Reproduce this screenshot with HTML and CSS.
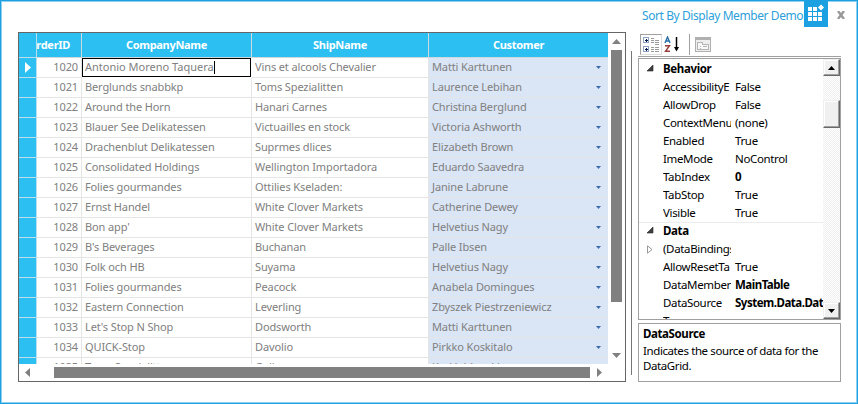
FILE: index.html
```html
<!DOCTYPE html>
<html lang="en">
<head>
<meta charset="utf-8">
<title>Sort By Display Member Demo</title>
<link rel="stylesheet" href="styles.css">
</head>
<body>
<div class="window">
  <header class="titlebar">
    <span class="title">Sort By Display Member Demo</span>
    <svg class="logo" width="24" height="26" shape-rendering="crispEdges"><rect width="24" height="26" fill="#1ba1e2"/><path fill="#fff" d="M4 6h4v4H4zM9 6h4v4H9zM4 11h4v4H4zM9 11h4v4H9zM14 11h4v4h-4zM4 16h4v4H4zM9 16h4v4H9zM14 16h4v4h-4z"/><path shape-rendering="auto" fill="#fff" d="M17 3.500l3 3-3 3-3-3z"/></svg>
    <svg class="close" width="8" height="8"><path d="M1 0l6 8M7 0L1 8" stroke="#999" stroke-width="2.400"/></svg>
  </header>
  <main class="content">
    <section class="grid-box">
      <div class="viewport">
        <div class="row head"><div class="mark"></div><div class="id"><span>OrderID</span></div><div class="company">CompanyName</div><div class="ship">ShipName</div><div class="customer">Customer</div></div>
        <div id="rows"></div>
      </div>
      <div class="vscroll">
        <svg width="9" height="5"><path d="M4.5 0L9 5H0z" fill="#808080"/></svg>
        <div class="vthumb"></div>
        <svg width="9" height="5"><path d="M0 0h9L4.500 5z" fill="#808080"/></svg>
      </div>
      <div class="hscroll">
        <svg width="5" height="9"><path d="M5 0v9L0 4.500z" fill="#808080"/></svg>
        <div class="hthumb"></div>
        <svg width="5" height="9"><path d="M0 0v9l5-4.500z" fill="#808080"/></svg>
      </div>
    </section>
    <div class="splitter"></div>
    <aside class="props">
      <div class="toolbar">
        <div class="tool active"><svg width="18" height="17" shape-rendering="crispEdges"><path fill="#fff" stroke="#8ea3c4" d="M1.500 1.500h5v5h-5zM1.500 10.500h5v5h-5z"/><path stroke="#00194c" d="M3 4h3M4 3v3M3 13h3M4 12v3"/><path stroke="#9a9a9a" d="M9 2.500h3M9 4.500h3M13 4.500h4M9 6.500h3M13 6.500h4M13 8.500h4M9 11.500h3M13 11.500h4M9 13.500h3M13 13.500h4M9 15.500h3M13 15.500h4"/></svg></div>
        <div class="tool"><svg width="16" height="17"><path d="M1 7l2.500-6L6 7M1.800 5h3.500" fill="none" stroke="#286fa8" stroke-width="1.400"/><path d="M1 9.700h4.500L1.500 15.300H6" fill="none" stroke="#983b3b" stroke-width="1.400"/><path d="M12.500 1v13" stroke="#000" stroke-width="1.500"/><path d="M10 11h5l-2.500 4.500z"/></svg></div>
        <div class="sep"></div>
        <svg class="pages" width="16" height="15" shape-rendering="crispEdges"><path fill="#eee" stroke="#b0b0b0" d="M.5.5h15v14H.5z"/><path fill="#b0b0b0" d="M0 0h16v3H0z"/><path fill="#f8f8f8" stroke="#b4b4b4" d="M2.500 5.500h5v2h6v5h-11z"/><path stroke="#b4b4b4" d="M5 9.500h1M8 9.500h4M5 11.500h1"/></svg>
      </div>
      <div class="list">
        <div class="items" id="items"></div>
        <div class="classic">
          <div class="btn"><svg width="7" height="4"><path d="M3.500 0L7 4H0z"/></svg></div>
          <div class="btn thumb"></div>
          <div class="btn last"><svg width="7" height="4"><path d="M0 0h7L3.500 4z"/></svg></div>
        </div>
      </div>
      <div class="help"><b>DataSource</b><p>Indicates the source of data for the<br>DataGrid.</p></div>
    </aside>
  </main>
</div>
<script src="script.js"></script>
</body>
</html>
```
FILE: styles.css
```css
* { box-sizing: border-box; }
body { margin: 0; font: 12px "Noto Sans", "Open Sans", sans-serif; }
svg { display: block; flex: none; }
.window { width: 858px; height: 404px; border: 1px solid #1ba1e2; box-shadow: inset 0 0 0 1px #8fd0f0; background: #fff; overflow: hidden; }
.titlebar { height: 31px; display: flex; justify-content: flex-end; padding-right: 12px; color: #2d9fd9; }
.title { width: 163px; font-size: 12px; line-height: 18px; padding-top: 6px; white-space: nowrap; letter-spacing: -.42px; }
.close { margin: 10px 0 0 9px; }
.logo { margin-left: -1px; }
.content { display: flex; padding-left: 17px; }
.grid-box { width: 608px; height: 350px; border: 1px solid #666; display: grid; grid-template: 331px 17px / 589px 17px; }
.viewport { overflow: hidden; color: #808080; font-size: 11px; letter-spacing: -.12px; white-space: nowrap; }
.row { display: grid; grid-template-columns: 18px 45px 170px 177px 179px; height: 20px; line-height: 18px; }
.row > div { border-right: 1px solid #e5e5e5; border-bottom: 1px solid #e5e5e5; padding-left: 3px; overflow: hidden; }
.row > .mark { background: #2bbff2; border-color: #b9dfee; padding: 4px 0 0 6px; }
.row > .id { text-align: right; padding-right: 3px; }
.row > .customer { background: #dae5f5; border-right: 0; display: flex; justify-content: space-between; padding-right: 7px; }
.customer svg { margin-top: 8px; }
.head { height: 25px; line-height: 24px; color: #fff; font-weight: bold; letter-spacing: -.3px; }
.head > div, .row.head > .customer { background: #2bbff2; border-color: #cfd8dc; text-align: center; justify-content: center; padding: 0; }
.head > .id { display: flex; justify-content: flex-end; }
.row.head > .id { padding-right: 11px; }
.row > .editing { border: 1px solid #000; margin: 0 1px 0 0; padding-left: 2px; line-height: 15px; height: 19px; letter-spacing: 0; }
.caret { display: inline-block; width: 1px; height: 13px; background: #000; vertical-align: -3px; }
.vscroll { display: flex; flex-direction: column; align-items: center; justify-content: space-between; padding: 6px 0; }
.vthumb { width: 11px; height: 252px; background: #808080; margin-bottom: 46px; }
.hscroll { grid-column: 1; display: flex; align-items: center; justify-content: space-between; padding: 0 6px; }
.hthumb { width: 536px; height: 11px; background: #808080; margin-left: 17px; }
.splitter { width: 1px; height: 324px; background: #777; margin: 19px 6px 0 5px; }
.props { width: 203px; }
.toolbar { height: 25px; border-bottom: 1px solid #a0a0a0; display: flex; padding: 2px 0 1px 2px; margin-bottom: 1px; }
.tool { width: 22px; height: 21px; padding: 2px; }
.active { border: 1px solid #a0a0a0; border-right-color: #ddd; border-bottom-color: #ddd; padding: 1px; }
.sep { width: 1px; height: 21px; background: #a0a0a0; margin-left: 5px; }
.pages { margin: 3px 0 0 5px; }
.list { height: 262px; border: 1px solid #a0a0a0; display: flex; overflow: hidden; }
.items { width: 184px; padding-top: 1px; overflow: hidden; font-size: 11.5px; letter-spacing: -.35px; }
.item { display: grid; grid-template-columns: 24px 68px 92px; height: 18px; line-height: 18px; white-space: nowrap; }
.item > * { overflow: hidden; }
.item .val { padding-left: 4px; line-height: 17px; }
.item .bold, .cat b { font-weight: bold; }
.item .bold { letter-spacing: -.5px; }
.item svg { margin: 5px 0 0 8px; }
.rule { box-shadow: inset 0 1px #ececec; }
.classic { width: 17px; display: flex; flex-direction: column; background: repeating-conic-gradient(#f0f0f0 0 25%, #fff 0 50%) 0 0 / 2px 2px; }
.btn { width: 17px; height: 17px; display: grid; place-items: center; background: #f0f0f0; border: 1px solid; border-color: #f0f0f0 #696969 #696969 #f0f0f0; box-shadow: inset -1px -1px #a0a0a0, inset 1px 1px #fff; }
.thumb { height: 28px; margin-top: 24px; }
.last { margin-top: auto; }
.help { height: 59px; border: 1px solid #a0a0a0; margin-top: 3px; padding: 1px 4px; font-size: 11.5px; letter-spacing: -.4px; line-height: 17px; white-space: nowrap; }
.help b { display: block; }
.help p { margin: 1px 0 0; line-height: 15px; }
```
FILE: script.js
```js
const data = [
  ["Antonio Moreno Taquera", "Vins et alcools Chevalier", "Matti Karttunen"],
  ["Berglunds snabbkp", "Toms Spezialitten", "Laurence Lebihan"],
  ["Around the Horn", "Hanari Carnes", "Christina Berglund"],
  ["Blauer See Delikatessen", "Victuailles en stock", "Victoria Ashworth"],
  ["Drachenblut Delikatessen", "Suprmes dlices", "Elizabeth Brown"],
  ["Consolidated Holdings", "Wellington Importadora", "Eduardo Saavedra"],
  ["Folies gourmandes", "Ottilies Kseladen:", "Janine Labrune"],
  ["Ernst Handel", "White Clover Markets", "Catherine Dewey"],
  ["Bon app'", "White Clover Markets", "Helvetius Nagy"],
  ["B's Beverages", "Buchanan", "Palle Ibsen"],
  ["Folk och HB", "Suyama", "Helvetius Nagy"],
  ["Folies gourmandes", "Peacock", "Anabela Domingues"],
  ["Eastern Connection", "Leverling", "Zbyszek Piestrzeniewicz"],
  ["Let's Stop N Shop", "Dodsworth", "Matti Karttunen"],
  ["QUICK-Stop", "Davolio", "Pirkko Koskitalo"],
  ["Toms Spezialitten", "Galina", "Karl Jablonski"]
];
const drop = '<svg width="5" height="3"><path d="M0 0h5L2.500 3z" fill="#3b6cae"/></svg>';
const pointer = '<svg width="6" height="11"><path d="M0 0l6 5.500L0 11z" fill="#fff"/></svg>';
document.getElementById("rows").innerHTML = data.map((r, i) =>
  `<div class="row"><div class="mark">${i ? "" : pointer}</div><div class="id">${1020 + i}</div>` +
  `<div class="company${i ? "" : " editing"}">${r[0]}${i ? "" : '<i class="caret"></i>'}</div>` +
  `<div class="ship">${r[1]}</div><div class="customer"><span>${r[2]}</span>${drop}</div></div>`).join("");

const open = '<svg width="7" height="7"><path d="M6 0v6H0z" fill="#404040" stroke="#222" stroke-width=".6"/></svg>';
const shut = '<svg width="6" height="9"><path d="M.5.8L5 4.500.5 8.200z" fill="#fff" stroke="#999"/></svg>';
const items = [
  [open, "Behavior"], ["", "AccessibilityE", "False"], ["", "AllowDrop", "False"], ["", "ContextMenu", "(none)"],
  ["", "Enabled", "True"], ["", "ImeMode", "NoControl"], ["", "TabIndex", "0", 1], ["", "TabStop", "True"],
  ["", "Visible", "True"], [open, "Data"], [shut, "(DataBindings)", ""], ["", "AllowResetTa", "True"],
  ["", "DataMember", "MainTable", 1], ["", "DataSource", "System.Data.DataSet", 1], ["", "Tag", ""]
];
document.getElementById("items").innerHTML = items.map((r, i) =>
  `<div class="item${r.length === 2 ? " cat" : ""}${i === 9 ? " rule" : ""}"><div>${r[0]}</div>` +
  (r.length === 2 ? `<b>${r[1]}</b>` : `<div>${r[1]}</div><div class="val${r[3] ? " bold" : ""}">${r[2]}</div>`) + "</div>").join("");
```
